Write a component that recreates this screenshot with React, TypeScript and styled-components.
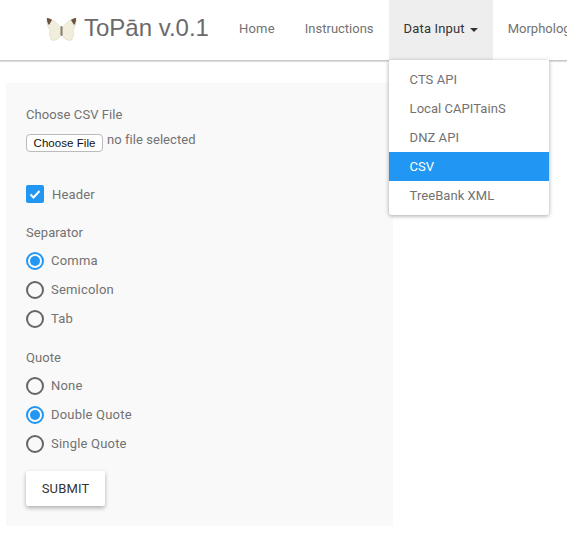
import React from "react";
import styled, { createGlobalStyle } from "styled-components";

const Global = createGlobalStyle`
  html, body { margin: 0; padding: 0; background: #fff; overflow: hidden; }
  body { font-family: Roboto, "Liberation Sans", sans-serif; color: #727272; font-size: 13px; }
`;
const Page = styled.div`width: 567px; height: 552px; overflow: hidden;`;
const NavBar = styled.nav`
  display: flex; align-items: stretch; height: 60px; padding-left: 46px;
  border-bottom: 1px solid #c8c8c8; box-shadow: 0 1px 1px rgba(0,0,0,.12); white-space: nowrap;
`;
const Brand = styled.div`
  display: flex; align-items: center; gap: 7px; width: 178px; flex: none; padding-bottom: 4px; box-sizing: border-box;
  font-family: "Liberation Sans", Arial, sans-serif; font-size: 24px; color: #6a6a6a;
  & > svg { margin-top: 2px; }
`;
const NavItem = styled.div<{ $open?: boolean; $spacing?: number }>`
  position: relative; display: flex; align-items: center; flex: none; box-sizing: border-box; padding: 0 15px 3px;
  letter-spacing: ${p => p.$spacing ?? 0}px; height: 60px;
  background: ${p => (p.$open ? "#eeeeee" : "transparent")};
  color: ${p => (p.$open ? "#333" : "#727272")};
`;
const Caret = styled.span`
  display: inline-block; margin-left: 5px; margin-top: 2px; width: 0; height: 0;
  border-left: 4px solid transparent; border-right: 4px solid transparent; border-top: 4px solid #333;
`;
const Menu = styled.ul`
  position: absolute; left: 0; top: 60px; width: 160px; margin: 0; padding: 5px 0; list-style: none;
  background: #fff; border-radius: 0 0 3px 3px; box-shadow: 0 1px 4px rgba(0,0,0,.35); z-index: 2;
  letter-spacing: .05px;
`;
const MenuItem = styled.li<{ $active?: boolean }>`
  height: 29px; line-height: 29px; padding: 0 21px;
  background: ${p => (p.$active ? "#2196f3" : "transparent")};
  color: ${p => (p.$active ? "#fff" : "#727272")};
`;
const Panel = styled.form`
  display: flex; flex-direction: column; align-items: flex-start; box-sizing: border-box;
  width: 387px; height: 443px; margin: 22px 0 0 6px; padding: 24px 20px 0; background: #f9f9f9;
`;
const Label = styled.div`line-height: 15px; letter-spacing: .08px;`;
const FileRow = styled.div`display: flex; align-items: flex-start; gap: 4px; margin-top: 10px; height: 22px; line-height: 15px; letter-spacing: .05px;`;
const FileButton = styled.span`
  display: block; box-sizing: border-box; width: 77px; height: 18px; margin-top: 2px; text-align: center;
  font: 11.5px/16px "Liberation Sans", Arial, sans-serif; color: #111; background: #fff;
  border: 1px solid #bbb; border-radius: 4px;
`;
const CheckRow = styled.div`display: flex; align-items: center; gap: 8px; margin-top: 30px; height: 20px; letter-spacing: .15px;`;
const CheckBox = styled.span`
  display: flex; align-items: center; justify-content: center; width: 18px; height: 18px;
  background: #2196f3; border-radius: 2px;
`;
const SectionLabel = styled(Label)<{ $top: number }>`margin-top: ${p => p.$top}px;`;
const RadioList = styled.div`display: flex; flex-direction: column; margin-top: 6px;`;
const RadioRow = styled.div`display: flex; align-items: center; gap: 7px; height: 29px; letter-spacing: .2px;`;
const Radio = styled.span<{ $on?: boolean }>`
  position: relative; box-sizing: border-box; width: 18px; height: 18px; border-radius: 50%;
  border: 2px solid ${p => (p.$on ? "#2196f3" : "#666")};
  &::after {
    content: ""; display: ${p => (p.$on ? "block" : "none")}; position: absolute; inset: 2px;
    border-radius: 50%; background: #2196f3;
  }
`;
const Submit = styled.button`
  width: 79px; height: 35px; margin-top: 13px; padding: 0; border: 0; border-radius: 2px; background: #fff;
  color: #333; font: 400 13px Roboto, sans-serif; letter-spacing: .15px;
  box-shadow: 0 2px 4px rgba(0,0,0,.3);
`;

const Butterfly = () => (
  <svg width="31" height="24" viewBox="0 0 31 24">
    <path d="M15 12C12 6 6 1.500 1 1 .5 5 1.500 10 4 13 3 16 3.500 20 5.500 23c4 1 8-1 9.500-6z" fill="#f1eedd" stroke="#d9d3bb" strokeWidth=".6" />
    <path d="M16 12C19 6 25 1.500 30 1 30.500 5 29.500 10 27 13c1 3 .5 7-1.500 10-4 1-8-1-9.500-6z" fill="#f1eedd" stroke="#d9d3bb" strokeWidth=".6" />
    <path d="M1 1C2.800 1.200 4.500 2 6 3L3 8C1.500 6.500 .8 4 1 1z" fill="#6b5240" />
    <path d="M30 1C28.200 1.200 26.500 2 25 3L28 8C29.500 6.500 30.200 4 30 1z" fill="#6b5240" />
    <rect x="14.500" y="9" width="2" height="10" rx="1" fill="#85806f" />
  </svg>
);

export default function App() {
  return (
    <Page>
      <Global />
      <NavBar>
        <Brand><Butterfly />ToPān v.0.1</Brand>
        <NavItem $spacing={0.2}>Home</NavItem>
        <NavItem>Instructions</NavItem>
        <NavItem $open $spacing={0.15}>
          Data Input<Caret />
          <Menu>
            <MenuItem>CTS API</MenuItem>
            <MenuItem>Local CAPITainS</MenuItem>
            <MenuItem>DNZ API</MenuItem>
            <MenuItem $active>CSV</MenuItem>
            <MenuItem>TreeBank XML</MenuItem>
          </Menu>
        </NavItem>
        <NavItem>Morphology</NavItem>
      </NavBar>
      <Panel>
        <Label>Choose CSV File</Label>
        <FileRow><FileButton>Choose File</FileButton>no file selected</FileRow>
        <CheckRow>
          <CheckBox>
            <svg width="14" height="14" viewBox="0 0 14 14"><path d="M2.500 7.500l3 3 6-6.500" stroke="#fff" strokeWidth="2" fill="none" /></svg>
          </CheckBox>
          Header
        </CheckRow>
        <SectionLabel $top={21}>Separator</SectionLabel>
        <RadioList>
          <RadioRow><Radio $on />Comma</RadioRow>
          <RadioRow><Radio />Semicolon</RadioRow>
          <RadioRow><Radio />Tab</RadioRow>
        </RadioList>
        <SectionLabel $top={17}>Quote</SectionLabel>
        <RadioList>
          <RadioRow><Radio />None</RadioRow>
          <RadioRow><Radio $on />Double Quote</RadioRow>
          <RadioRow><Radio />Single Quote</RadioRow>
        </RadioList>
        <Submit type="button">SUBMIT</Submit>
      </Panel>
    </Page>
  );
}
